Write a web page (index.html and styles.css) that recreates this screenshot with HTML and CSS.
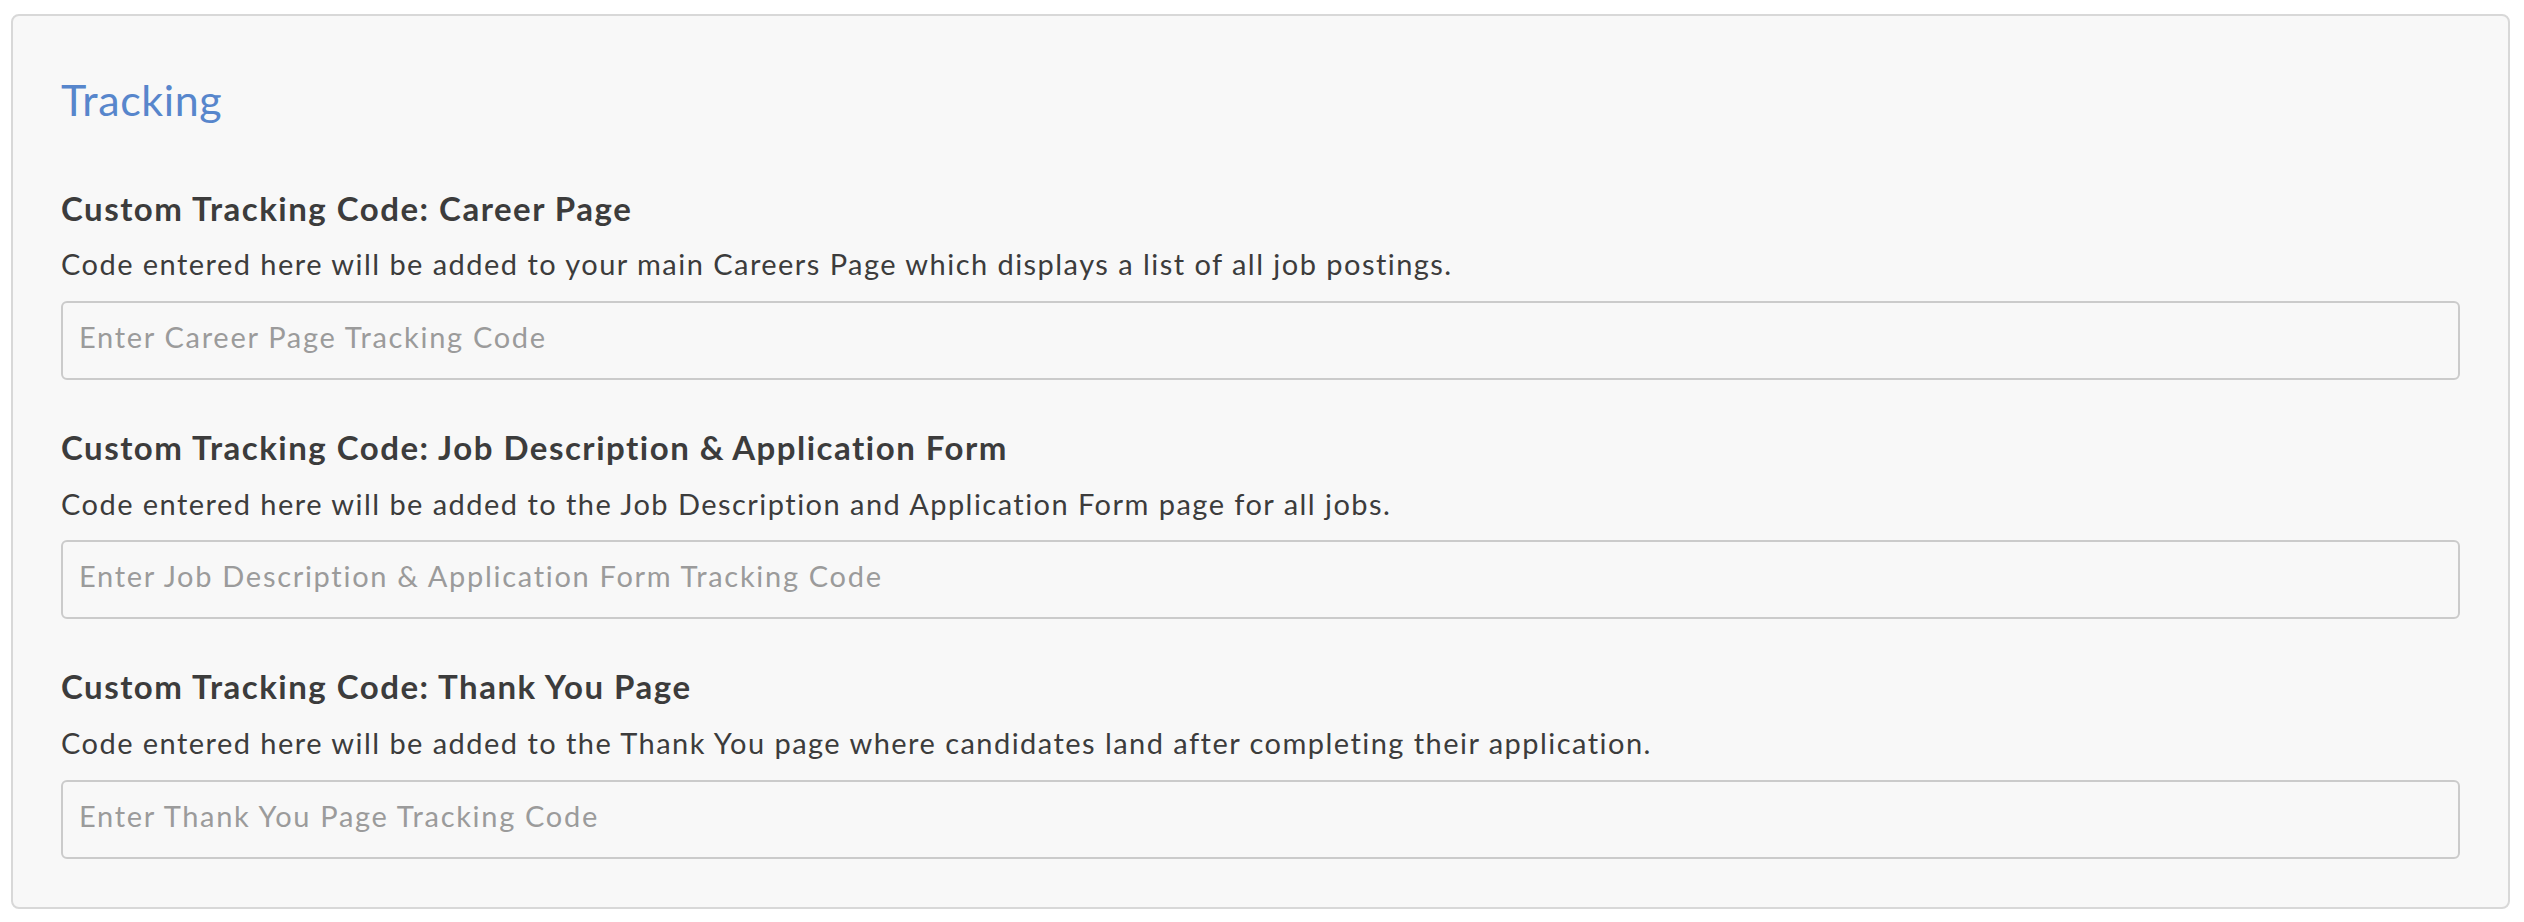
FILE: index.html
```html
<!DOCTYPE html>
<html lang="en">
<head>
<meta charset="utf-8">
<title>Tracking</title>
<link rel="stylesheet" href="styles.css">
</head>
<body>
<div class="page">
  <section class="panel">
    <h2 class="panel-title">Tracking</h2>
    <div class="field">
      <label class="field-label" for="career">Custom Tracking Code: Career Page</label>
      <p class="field-help">Code entered here will be added to your main Careers Page which displays a list of all job postings.</p>
      <input class="field-input" id="career" type="text" placeholder="Enter Career Page Tracking Code">
    </div>
    <div class="field">
      <label class="field-label" for="jobdesc">Custom Tracking Code: Job Description <span class="amp">&amp;</span> Application Form</label>
      <p class="field-help">Code entered here will be added to the Job Description and Application Form page for all jobs.</p>
      <input class="field-input" id="jobdesc" type="text" placeholder="Enter Job Description &amp; Application Form Tracking Code">
    </div>
    <div class="field">
      <label class="field-label" for="thanks">Custom Tracking Code: Thank You Page</label>
      <p class="field-help">Code entered here will be added to the Thank You page where candidates land after completing their application.</p>
      <input class="field-input" id="thanks" type="text" placeholder="Enter Thank You Page Tracking Code">
    </div>
  </section>
</div>
</body>
</html>
```

FILE: styles.css
```css
html, body {
  margin: 0;
  padding: 0;
  background: #ffffff;
}

body {
  font-family: "Lato", "Liberation Sans", sans-serif;
  color: #3c3c3c;
}

.page {
  padding: 14px 14px 16px 11px;
}

.panel {
  background: #f8f8f8;
  border: 2px solid #d8d8d8;
  border-radius: 8px;
  padding: 58px 48px 48px 48px;
  display: flex;
  flex-direction: column;
}

.panel-title {
  margin: 0;
  font-size: 43px;
  line-height: 1.2;
  font-weight: 400;
  letter-spacing: 0.6px;
  color: #5786cc;
}

.field {
  display: flex;
  flex-direction: column;
  margin-top: 48px;
}

.panel-title + .field {
  margin-top: 63px;
}

.field-label {
  font-size: 33px;
  line-height: 1.2;
  font-weight: 700;
  letter-spacing: 1.5px;
  color: #3c3c3c;
}

.amp {
  letter-spacing: 0;
}

.field-help {
  margin: 19px 0 0 0;
  font-size: 29px;
  line-height: 1.2;
  letter-spacing: 1.46px;
  color: #3c3c3c;
}

.field-input {
  margin-top: 19px;
  box-sizing: border-box;
  height: 79px;
  width: 100%;
  padding: 0 16px 8px 16px;
  border: 2px solid #cbcbcb;
  border-radius: 6px;
  background: #f8f8f8;
  font-family: "Lato", "Liberation Sans", sans-serif;
  font-size: 29px;
  letter-spacing: 1.7px;
  color: #3c3c3c;
  outline: none;
}

.field-input::placeholder {
  color: #9b9b9b;
  opacity: 1;
}
```
